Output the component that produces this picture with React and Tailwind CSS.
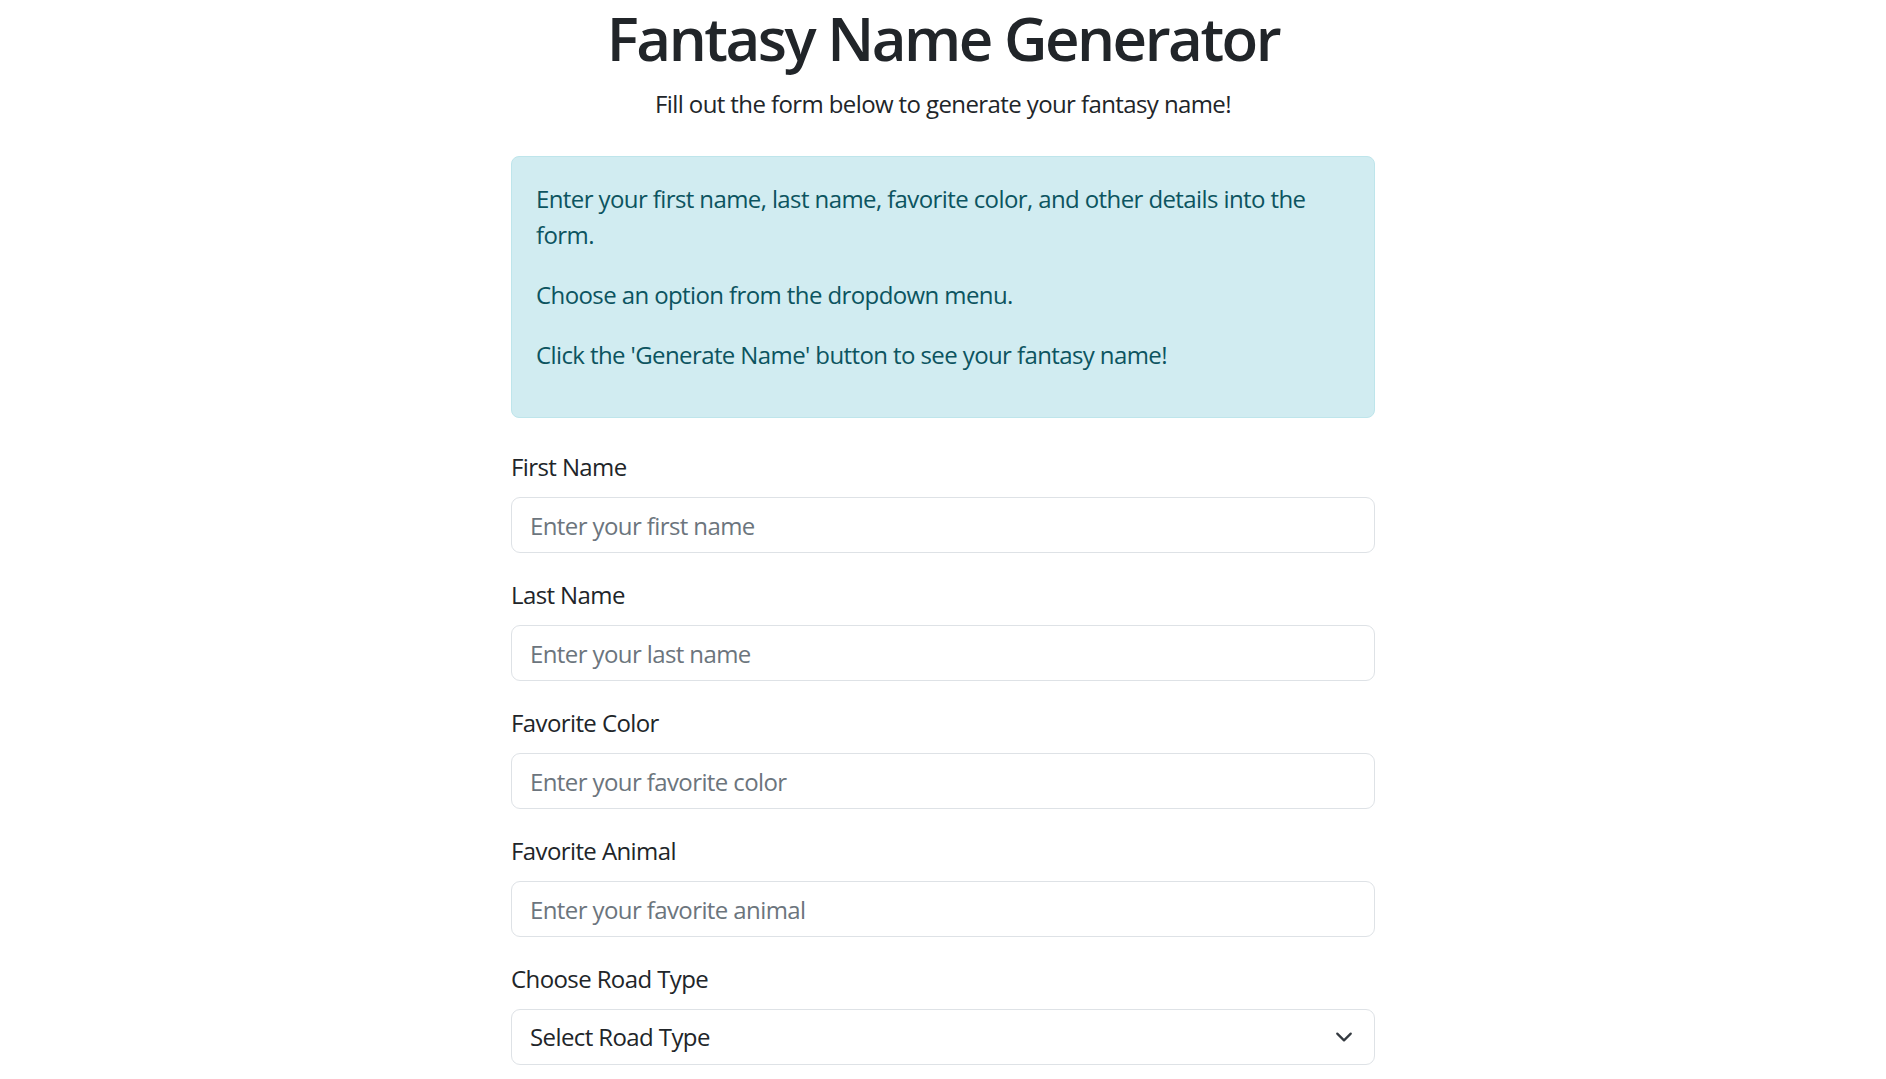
import React from "react"

const fields = [
  { label: "First Name", placeholder: "Enter your first name" },
  { label: "Last Name", placeholder: "Enter your last name" },
  { label: "Favorite Color", placeholder: "Enter your favorite color" },
  { label: "Favorite Animal", placeholder: "Enter your favorite animal" },
]

export default function App() {
  return (
    <div
      className="min-h-screen bg-white text-[#212529] tracking-[-0.6px]"
      style={{ fontFamily: '"Open Sans", "Noto Sans", sans-serif' }}
    >
      <div className="mx-auto w-[864px]">
        <h1 className="mt-[2px] text-center text-[60px] font-semibold leading-[72px] tracking-[-2.5px]">
          Fantasy Name Generator
        </h1>
        <p className="mt-[12px] text-center text-[24px] leading-[36px]">
          Fill out the form below to generate your fantasy name!
        </p>

        <div className="mt-[34px] rounded-[8px] border border-[#bee5eb] bg-[#d1ecf1] px-[24px] pt-[24px] pb-[20px] text-[24px] leading-[36px] text-[#0c5460]">
          <p className="mb-[24px]">
            Enter your first name, last name, favorite color, and other details into the form.
          </p>
          <p className="mb-[24px]">Choose an option from the dropdown menu.</p>
          <p className="mb-[24px]">Click the 'Generate Name' button to see your fantasy name!</p>
        </div>

        <form className="mt-[31px]">
          {fields.map((f) => (
            <div key={f.label} className="mb-[24px]">
              <label className="mb-[12px] block text-[24px] leading-[36px]">{f.label}</label>
              <input
                type="text"
                placeholder={f.placeholder}
                className="block h-[56px] w-full rounded-[9px] border border-[#dee2e6] bg-white px-[18px] text-[24px] tracking-[-0.6px] text-[#212529] outline-none placeholder:text-[#6c757d]"
              />
            </div>
          ))}

          <div className="mb-[24px]">
            <label className="mb-[12px] block text-[24px] leading-[36px]">Choose Road Type</label>
            <div className="flex h-[56px] w-full items-center justify-between rounded-[9px] border border-[#dee2e6] bg-white pl-[18px] pr-[21px] text-[24px]">
              <span>Select Road Type</span>
              <svg width="18" height="18" viewBox="0 0 16 16" fill="none">
                <path
                  d="m2 5 6 6 6-6"
                  stroke="#343a40"
                  strokeWidth="2"
                  strokeLinecap="round"
                  strokeLinejoin="round"
                />
              </svg>
            </div>
          </div>
        </form>
      </div>
    </div>
  )
}
